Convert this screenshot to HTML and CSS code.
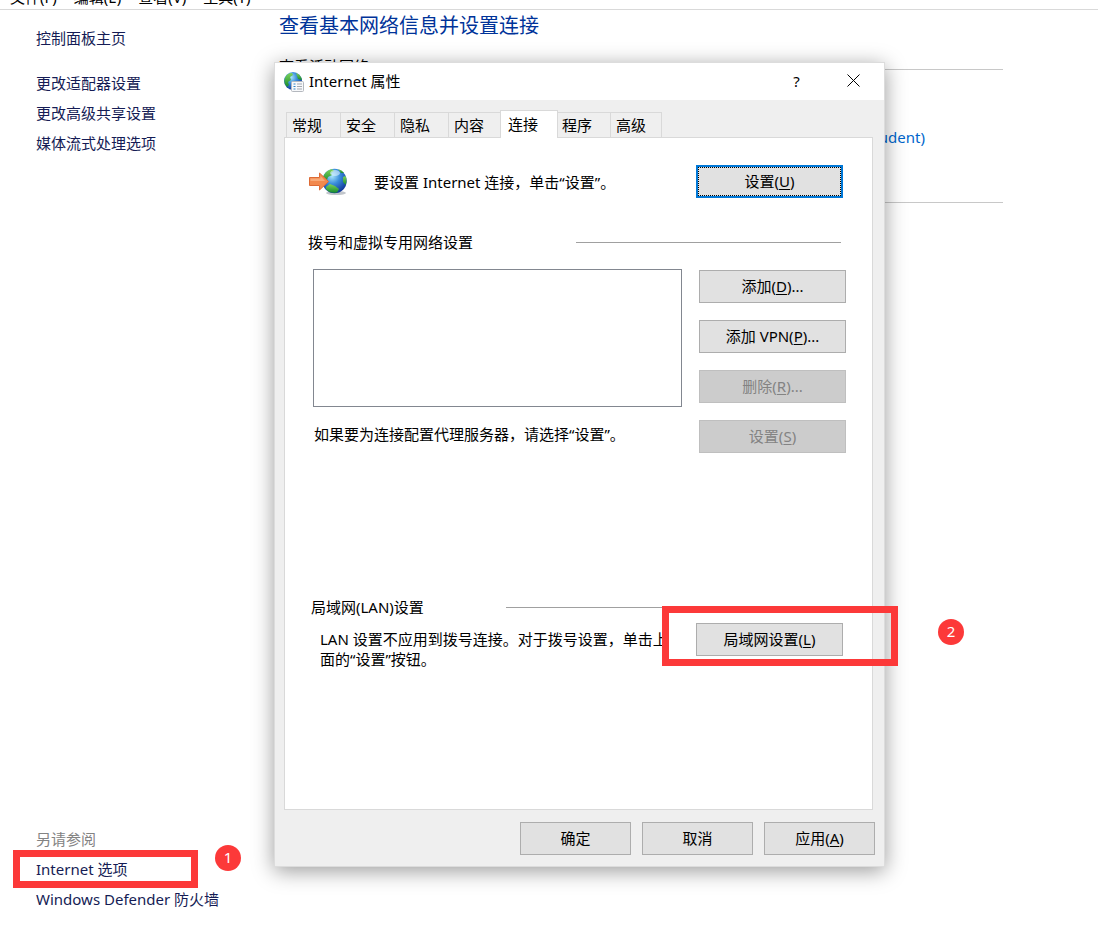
FILE: index.html
```html
<!DOCTYPE html>
<html lang="zh-CN">
  <head>
    <meta charset="utf-8">
    <title>Internet 属性</title>
    <link rel="stylesheet" href="styles.css">
  </head>
  <body>
    <!-- Menu bar -->
    <nav class="menubar">
      <a href="#">文件(F)</a>
      <a href="#">编辑(E)</a>
      <a href="#">查看(V)</a>
      <a href="#">工具(T)</a>
    </nav>

    <div class="page">
      <!-- Sidebar -->
      <aside class="sidebar">
        <a class="home" href="#">控制面板主页</a>
        <ul class="links">
          <li><a href="#">更改适配器设置</a></li>
          <li><a href="#">更改高级共享设置</a></li>
          <li><a href="#">媒体流式处理选项</a></li>
        </ul>
        <div class="see-also">
          <span class="see-title">另请参阅</span>
          <ul class="links">
            <li class="marked">
              <a href="#">Internet 选项</a>
              <span class="mark-box mark-box-1"></span>
              <span class="badge badge-1">1</span>
            </li>
            <li><a href="#">Windows Defender 防火墙</a></li>
          </ul>
        </div>
      </aside>

      <!-- Network info -->
      <main class="content">
        <h1>查看基本网络信息并设置连接</h1>
        <div class="net-title">
          <span class="net-name">查看活动网络</span>
          <span class="net-line"></span>
        </div>
        <div class="net-body">
          <a href="#">(Student)</a>
        </div>
      </main>
    </div>

    <!-- Dialog -->
    <div class="dialog" role="dialog" aria-labelledby="dialog-title">
      <div class="titlebar">
        <svg class="title-icon" width="20" height="20" viewBox="0 0 20 20">
          <defs>
            <radialGradient id="sea" cx="40%" cy="30%" r="70%">
              <stop offset="0" stop-color="#a9e4fb"/>
              <stop offset="0.45" stop-color="#3b8fdc"/>
              <stop offset="1" stop-color="#123a9c"/>
            </radialGradient>
            <linearGradient id="land" x1="0" y1="0" x2="0" y2="1">
              <stop offset="0" stop-color="#7fd35b"/>
              <stop offset="1" stop-color="#158a2e"/>
            </linearGradient>
          </defs>
          <circle cx="9" cy="9" r="9" fill="url(#sea)"/>
          <path d="M1 6 Q3 1 8 1 L9 3 L6 5 L7 8 L4 10 L5 13 L3 15 Q-1 11 1 6Z" fill="url(#land)"/>
          <path d="M12 1 Q17 3 18 8 L14 7 L13 4Z" fill="url(#land)"/>
          <rect x="7.5" y="9.5" width="12" height="10" rx="1" fill="#f7f8fa" stroke="#b4b8be"/>
          <path d="M9.5 12h2M9.5 14.500h2M9.5 17h2" stroke="#2c86c9"/>
          <path d="M13 12h5M13 14.500h5M13 17h5" stroke="#a3a9b1"/>
        </svg>
        <span class="title-text" id="dialog-title">Internet 属性</span>
        <button class="title-btn" type="button" aria-label="帮助">?</button>
        <button class="title-btn" type="button" aria-label="关闭">
          <svg width="13" height="13" viewBox="0 0 13 13">
            <path d="M0.5 0.5L12.5 12.5M12.5 0.5L0.5 12.5" stroke="#000"/>
          </svg>
        </button>
      </div>

      <div class="tabs" role="tablist">
        <button class="tab" type="button" role="tab">常规</button>
        <button class="tab" type="button" role="tab">安全</button>
        <button class="tab" type="button" role="tab">隐私</button>
        <button class="tab" type="button" role="tab">内容</button>
        <button class="tab active" type="button" role="tab" aria-selected="true">连接</button>
        <button class="tab" type="button" role="tab">程序</button>
        <button class="tab last" type="button" role="tab">高级</button>
      </div>

      <div class="panel" role="tabpanel">
        <!-- Internet connection -->
        <div class="setup">
          <svg width="39" height="28" viewBox="0 0 39 28">
            <ellipse cx="27" cy="25" rx="10" ry="2" fill="#9aa0a8" opacity="0.6"/>
            <circle cx="25.5" cy="13" r="12.2" fill="url(#sea)"/>
            <path d="M14 9 Q17 2 23 1 L25 3 L22 5 L23 7 L19 9 L18 12 L14 14Z" fill="url(#land)"/>
            <path d="M29 1 Q33 2 35 5 L32 5Z" fill="url(#land)"/>
            <path d="M36.500 8 Q38.500 12 36.500 17 L34 14 L34 9Z" fill="url(#land)"/>
            <path d="M17 19 L21 16 L26 18 L30 21 L28 24.500 Q21 26 17 21Z" fill="url(#land)"/>
            <ellipse cx="26" cy="5" rx="5" ry="3" fill="#e9faff" opacity="0.55"/>
            <path d="M0.5 9.500 H10.5 V5 L19.5 13.5 L10.5 22 V17.5 H0.5Z" fill="#f2894e" stroke="#dd6a35"/>
            <path d="M1.5 10.500 H11.5 V8 L16 13 H1.5Z" fill="#f9b384" opacity="0.8"/>
          </svg>
          <span class="setup-text">要设置 Internet 连接，单击“设置”。</span>
          <button class="btn focused" type="button">设置(<u>U</u>)</button>
        </div>

        <!-- Dial-up and VPN -->
        <div class="group-title">
          <label for="connections">拨号和虚拟专用网络设置</label>
          <span class="group-line"></span>
        </div>
        <div class="dialup">
          <div class="dialup-left">
            <select class="list" id="connections" multiple></select>
            <p>如果要为连接配置代理服务器，请选择“设置”。</p>
          </div>
          <div class="dialup-btns">
            <button class="btn" type="button">添加(<u>D</u>)...</button>
            <button class="btn" type="button">添加 VPN(<u>P</u>)...</button>
            <button class="btn" type="button" disabled>删除(<u>R</u>)...</button>
            <button class="btn" type="button" disabled>设置(<u>S</u>)</button>
          </div>
        </div>

        <!-- LAN -->
        <div class="group-title lan-title">
          <span>局域网(LAN)设置</span>
          <span class="group-line"></span>
        </div>
        <div class="lan">
          <p>LAN 设置不应用到拨号连接。对于拨号设置，单击上面的“设置”按钮。</p>
          <div class="marked">
            <button class="btn" type="button">局域网设置(<u>L</u>)</button>
            <span class="mark-box mark-box-2"></span>
            <span class="badge badge-2">2</span>
          </div>
        </div>
      </div>

      <div class="footer">
        <button class="btn" type="button">确定</button>
        <button class="btn" type="button">取消</button>
        <button class="btn" type="button">应用(<u>A</u>)</button>
      </div>
    </div>
  </body>
</html>
```

FILE: styles.css
```css
* {
  box-sizing: border-box;
}

body {
  margin: 0;
  min-height: 100vh;
  display: flex;
  flex-direction: column;
  position: relative;
  background: #fff;
  color: #000;
  font-family: "Noto Sans", "Noto Sans CJK SC", sans-serif;
  font-size: 15px;
  line-height: 20px;
}

a {
  text-decoration: none;
}

p {
  margin: 0;
}

button {
  font: inherit;
  color: inherit;
}

/* Menu bar */
.menubar {
  display: flex;
  align-items: flex-end;
  gap: 17px;
  height: 10px;
  padding: 0 10px 2px;
  border-bottom: 1px solid #d9d9d9;
  overflow: hidden;
}

.menubar a {
  color: #000;
}

.page {
  flex: 1;
  display: flex;
}

/* Sidebar */
.sidebar {
  width: 279px;
  padding: 18px 0 17px 36px;
  display: flex;
  flex-direction: column;
}

.sidebar a {
  color: #151c55;
}

.home {
  margin-bottom: 25px;
}

.links {
  list-style: none;
  margin: 0;
  padding: 0;
  display: flex;
  flex-direction: column;
  gap: 10px;
}

.see-also {
  margin-top: auto;
  display: flex;
  flex-direction: column;
  gap: 10px;
}

.see-title {
  color: #838383;
}

/* Network info */
.content {
  flex: 1;
  padding: 3px 95px 0 0;
}

h1 {
  margin: 0;
  color: #003399;
  font-size: 20px;
  font-weight: normal;
  line-height: 26px;
}

.net-title {
  display: flex;
  align-items: center;
  gap: 12px;
  margin-top: 17px;
}

.net-name {
  padding-bottom: 6px;
}

.net-line {
  flex: 1;
  border-top: 1px solid #c8c8c8;
}

.net-body {
  height: 121px;
  padding: 45px 78px 0 0;
  border-bottom: 1px solid #c8c8c8;
  text-align: right;
}

.net-body a {
  color: #0066cc;
}

/* Dialog */
.dialog {
  position: absolute;
  left: 274px;
  top: 62px;
  width: 611px;
  background: #efefef;
  border: 1px solid #dcdcdc;
  box-shadow: 0 4px 20px rgba(0, 0, 0, 0.4);
}

.titlebar {
  display: flex;
  align-items: center;
  height: 37px;
  padding: 0 2px 0 9px;
  background: #fff;
}

.title-text {
  flex: 1;
  margin-left: 5px;
  padding-bottom: 2px;
}

.title-btn {
  width: 57px;
  height: 37px;
  padding: 0 0 2px;
  display: flex;
  align-items: center;
  justify-content: center;
  background: none;
  border: none;
}

/* Tabs */
.tabs {
  display: flex;
  align-items: flex-end;
  height: 37px;
  padding-left: 11px;
}

.tab {
  width: 54px;
  height: 25px;
  padding: 0 0 0 5px;
  background: #efefef;
  border: solid #d9d9d9;
  border-width: 1px 0 0 1px;
  text-align: left;
}

.tab.active {
  position: relative;
  width: 58px;
  height: 28px;
  margin: 0 -2px -1px;
  padding: 0 0 2px 7px;
  background: #fff;
  border-width: 1px 1px 0;
}

.tab.last {
  width: 52px;
  border-right-width: 1px;
}

.panel {
  margin: 0 11px 0 9px;
  padding: 27px 0 140px;
  background: #fff;
  border: 1px solid #d9d9d9;
}

/* Buttons */
.btn {
  width: 147px;
  height: 33px;
  padding: 0 0 2px;
  background: #e1e1e1;
  border: 1px solid #adadad;
}

.btn:disabled {
  background: #cccccc;
  border-color: #bfbfbf;
  color: #838383;
}

.btn.focused {
  border: 2px solid #0078d7;
  outline: 1px dotted #000;
  outline-offset: -3px;
}

.btn u {
  text-underline-offset: 2px;
}

/* Panel contents */
.setup {
  display: flex;
  align-items: center;
  padding: 0 29px 0 24px;
}

.setup-text {
  flex: 1;
  margin-left: 26px;
}

.group-title {
  display: grid;
  grid-template-columns: 268px 1fr;
  align-items: center;
  margin-top: 34px;
  padding: 0 31px 0 23px;
}

.group-line {
  border-top: 1px solid #a0a0a0;
}

.dialup {
  display: flex;
  gap: 17px;
  margin-top: 17px;
  padding: 0 26px 0 28px;
}

.dialup-left {
  flex: 1;
}

.list {
  display: block;
  width: 100%;
  height: 138px;
  background: #fff;
  border: 1px solid #828790;
  border-radius: 0;
}

.dialup-left p {
  margin: 17px 0 0 1px;
}

.dialup-btns {
  display: flex;
  flex-direction: column;
  gap: 17px;
  padding-top: 1px;
}

.lan-title {
  grid-template-columns: 195px 1fr;
  margin-top: 144px;
  padding-left: 26px;
}

.lan {
  display: flex;
  gap: 24px;
  margin-top: 6px;
  padding: 0 29px 0 35px;
}

.lan p {
  flex: 1;
  padding-top: 6px;
}

.footer {
  display: flex;
  justify-content: flex-end;
  gap: 11px;
  padding: 12px 9px 11px;
}

.footer .btn {
  width: 111px;
}

/* Red step marks */
.marked {
  position: relative;
}

.mark-box {
  position: absolute;
  border: 7px solid #fc3939;
  pointer-events: none;
}

.mark-box-1 {
  left: -23px;
  top: -9px;
  width: 185px;
  height: 38px;
}

.mark-box-2 {
  left: -34px;
  top: -17px;
  width: 236px;
  height: 60px;
}

.badge {
  position: absolute;
  width: 26px;
  height: 26px;
  border-radius: 50%;
  background: #fc3939;
  color: #fff;
  line-height: 24px;
  text-align: center;
}

.badge-1 {
  left: 179px;
  top: -14px;
}

.badge-2 {
  left: 242px;
  top: -4px;
}
```
